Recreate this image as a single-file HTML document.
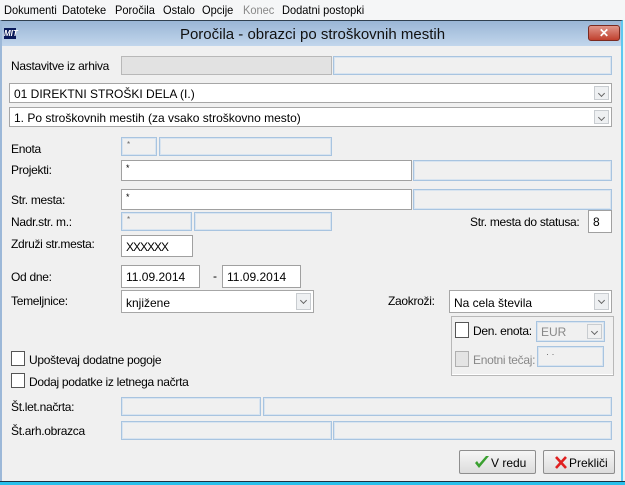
<!DOCTYPE html>
<html><head><meta charset="utf-8"><style>
*{margin:0;padding:0;box-sizing:border-box}
body{width:625px;height:485px;background:#f0f0f0;font-family:"Liberation Sans",sans-serif;font-size:12px;color:#000;position:relative;overflow:hidden}
.a{position:absolute;white-space:nowrap}
.menu{left:0;top:0;width:625px;height:20px;background:#f5f6f7}
.menu span{position:absolute;top:3px;font-size:12px;transform:scaleX(0.92);transform-origin:left}
.win{left:0;top:20px;width:623px;height:465px;background:#f0f0f0;border-left:2px solid #9cb8d8;border-right:2px solid #5ec8f0;border-top:1px solid #304050}
.title{left:2px;top:21px;width:619px;height:25px;background:linear-gradient(#9ab6d6,#c2d6ec)}
.lbl{font-size:12px;letter-spacing:-0.3px}
.box{position:absolute;background:#f0f0f0;border:1px solid #a8c4e0;box-shadow:inset 0 0 0 1px #d8e4f0}
.gray{position:absolute;background:#e2e2e2;border:1px solid #b8b8b8}
.inp{position:absolute;background:#fff;border:1px solid #a0a0a0;padding:2px 0 0 4px;font-size:12px}
.cb{position:absolute;background:#fff;border:1px solid #a6a6a6;padding:3px 0 0 4px;font-size:12px}
.dd{position:absolute;right:2px;top:2px;bottom:2px;width:15px;background:#eef0f2;border:1px solid #c8ccd0}
.dd:after{content:"";position:absolute;left:4px;top:4px;width:4px;height:4px;border-right:1.5px solid #666;border-bottom:1.5px solid #666;transform:rotate(45deg)}
.chk{position:absolute;width:13px;height:13px;background:#fff;border:1px solid #555}
.btn{position:absolute;background:linear-gradient(#f6f6f6,#dcdcdc);border:1px solid #8e8e8e;border-radius:2px;font-size:12px}
</style></head><body>
<div class="a menu">
<span style="left:4px">Dokumenti</span><span style="left:62px">Datoteke</span><span style="left:115px">Poročila</span><span style="left:163px">Ostalo</span><span style="left:202px">Opcije</span><span style="left:243px;color:#888">Konec</span><span style="left:282px">Dodatni postopki</span>
</div>
<div class="a win"></div>
<div class="a title"></div>
<div class="a" style="left:4px;top:28px;width:12px;height:11px;background:#0a1a5a;color:#fff;font-size:8px;font-weight:bold;font-style:italic;line-height:11px">MIT</div>
<div class="a" style="left:0;width:625px;top:26px;text-align:center;font-size:15px;color:#111">Poročila - obrazci po stroškovnih mestih</div>
<div class="a" style="left:588px;top:25px;width:32px;height:16px;background:linear-gradient(#e0968a,#c0402e);border:1px solid #7a2a20;border-radius:3px;color:#fff;font-weight:bold;text-align:center;font-size:12px;line-height:14px">✕</div>
<div class="a" style="left:0;top:481px;width:625px;height:1px;background:#203040"></div>
<div class="a" style="left:0;top:482px;width:625px;height:3px;background:#28c0ec"></div>

<div class="a lbl" style="left:11px;top:59px">Nastavitve iz arhiva</div>
<div class="gray" style="left:121px;top:56px;width:211px;height:19px"></div>
<div class="box" style="left:333px;top:56px;width:279px;height:19px"></div>
<div class="cb" style="left:9px;top:83px;width:603px;height:20px">01 DIREKTNI STROŠKI DELA (I.)<div class="dd"></div></div>
<div class="cb" style="left:9px;top:107px;width:603px;height:20px">1. Po stroškovnih mestih (za vsako stroškovno mesto)<div class="dd"></div></div>

<div class="a lbl" style="left:11px;top:142px">Enota</div>
<div class="box" style="left:121px;top:137px;width:36px;height:19px;font-size:8px;padding:2px 5px;color:#666">*</div>
<div class="box" style="left:159px;top:137px;width:173px;height:19px"></div>
<div class="a lbl" style="left:11px;top:163px">Projekti:</div>
<div class="inp" style="left:121px;top:160px;width:291px;height:21px;font-size:9px">*</div>
<div class="box" style="left:413px;top:160px;width:199px;height:21px"></div>
<div class="a lbl" style="left:11px;top:193px">Str. mesta:</div>
<div class="inp" style="left:121px;top:189px;width:291px;height:21px;font-size:9px">*</div>
<div class="box" style="left:413px;top:189px;width:199px;height:21px"></div>
<div class="a lbl" style="left:11px;top:215px">Nadr.str. m.:</div>
<div class="box" style="left:121px;top:212px;width:71px;height:19px;font-size:8px;padding:2px 5px;color:#666">*</div>
<div class="box" style="left:194px;top:212px;width:138px;height:19px"></div>
<div class="a lbl" style="left:470px;top:215px">Str. mesta do statusa:</div>
<div class="inp" style="left:588px;top:210px;width:24px;height:23px;padding-top:4px">8</div>
<div class="a lbl" style="left:11px;top:237px">Združi str.mesta:</div>
<div class="inp" style="left:121px;top:235px;width:72px;height:22px;padding-top:4px;letter-spacing:-1px">XXXXXX</div>

<div class="a lbl" style="left:11px;top:270px">Od dne:</div>
<div class="inp" style="left:121px;top:265px;width:79px;height:23px;padding-top:4px">11.09.2014</div>
<div class="a" style="left:213px;top:269px">-</div>
<div class="inp" style="left:222px;top:265px;width:79px;height:23px;padding-top:4px">11.09.2014</div>
<div class="a lbl" style="left:11px;top:294px">Temeljnice:</div>
<div class="cb" style="left:121px;top:290px;width:193px;height:23px;padding-top:5px">knjižene<div class="dd"></div></div>
<div class="a lbl" style="left:388px;top:294px">Zaokroži:</div>
<div class="cb" style="left:449px;top:290px;width:163px;height:23px;padding-top:5px">Na cela števila<div class="dd"></div></div>

<div class="a" style="left:451px;top:316px;width:163px;height:60px;border:1px solid #b8b8b8;box-shadow:inset 0 -1px 0 #fff"></div>
<div class="chk" style="left:455px;top:322px;height:16px;width:14px"></div>
<div class="a lbl" style="left:473px;top:324px">Den. enota:</div>
<div class="box" style="left:536px;top:321px;width:69px;height:21px;color:#888;padding:3px 4px">EUR<div class="dd" style="background:#f0f0f0"></div></div>
<div class="chk" style="left:455px;top:351px;height:16px;width:14px;background:#e4e4e4;border-color:#b0b0b0"></div>
<div class="a lbl" style="left:473px;top:353px;color:#888">Enotni tečaj:</div>
<div class="box" style="left:537px;top:346px;width:67px;height:21px;color:#666;padding:2px 8px;font-size:9px">· ·</div>

<div class="chk" style="left:11px;top:351px;width:14px;height:15px"></div>
<div class="a lbl" style="left:29px;top:353px">Upoštevaj dodatne pogoje</div>
<div class="chk" style="left:11px;top:373px;width:14px;height:15px"></div>
<div class="a lbl" style="left:29px;top:375px">Dodaj podatke iz letnega načrta</div>

<div class="a lbl" style="left:11px;top:400px">Št.let.načrta:</div>
<div class="box" style="left:121px;top:397px;width:140px;height:19px"></div>
<div class="box" style="left:263px;top:397px;width:349px;height:19px"></div>
<div class="a lbl" style="left:11px;top:424px">Št.arh.obrazca</div>
<div class="box" style="left:121px;top:421px;width:211px;height:19px"></div>
<div class="box" style="left:333px;top:421px;width:279px;height:19px"></div>

<div class="btn" style="left:459px;top:450px;width:77px;height:24px">
<svg class="a" style="left:14px;top:3px" width="16" height="16" viewBox="0 0 16 16"><path d="M1 9 L5 14 L15 2 L12 2 L5 10 L3 7 Z" fill="#3aa030"/></svg>
<span class="a" style="left:31px;top:5px">V redu</span></div>
<div class="btn" style="left:543px;top:450px;width:72px;height:24px">
<svg class="a" style="left:10px;top:4px" width="14" height="15" viewBox="0 0 14 15"><path d="M2 2 L12 13 M12 2 L2 13" stroke="#e02020" stroke-width="2.6"/></svg>
<span class="a" style="left:25px;top:5px">Prekliči</span></div>
</body></html>
